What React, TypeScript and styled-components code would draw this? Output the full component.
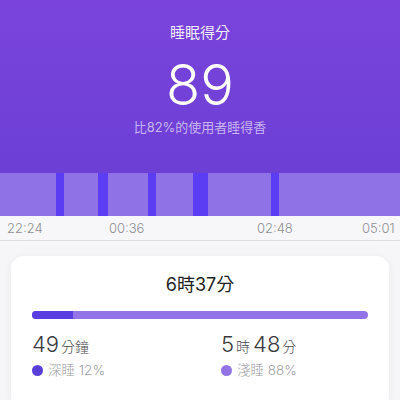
import React from 'react'
import styled, { createGlobalStyle } from 'styled-components'

const GlobalStyle = createGlobalStyle`
    body {
        margin: 0;
        background: #f6f6f8;
        font-family: Inter, "Noto Sans CJK TC", sans-serif;
    }
`

const Page = styled.div`
    width: 400px;
    height: 400px;
    overflow: hidden;
    display: flex;
    flex-flow: column nowrap;

    & > * {
        flex-shrink: 0;
    }
`

const Header = styled.header`
    height: 173px;
    background: linear-gradient(180deg, #7a44dc 0%, #6c3fd5 100%);
    display: flex;
    flex-flow: column nowrap;
    align-items: center;
    color: white;
    padding-top: 22px;
    box-sizing: border-box;
`

const Title = styled.div`
    font-size: 15px;
    line-height: 22px;
    font-weight: 400;
    color: rgba(255,255,255,0.92);
`

const Score = styled.div`
    font-size: 56px;
    line-height: 60px;
    font-weight: 300;
    margin-top: 11px;
`

const Subtitle = styled.div`
    font-size: 13px;
    line-height: 18px;
    color: #c8b6f2;
    margin-top: 3px;
`

const SleepBar = styled.div`
    display: flex;
    height: 43px;
`

const Segment = styled.div<{ $deep: boolean; $w: number }>`
    flex: 0 0 ${({ $w }) => $w}px;
    background: ${({ $deep }) => $deep ? '#5b3ef4' : '#8f73e6'};
`

const TimeAxis = styled.div`
    position: relative;
    height: 24px;
    border-bottom: 1px solid #dedee2;
    background: #f7f7f9;
`

const TimeLabel = styled.span<{ $left: number }>`
    position: absolute;
    left: ${({ $left }) => $left}px;
    top: 4px;
    font-size: 13px;
    line-height: 16px;
    font-weight: 300;
    color: #8f8f95;
`

const Card = styled.section`
    margin: 15px 11px 0;
    background: white;
    border-radius: 13px;
    box-shadow: 0 2px 10px rgba(0,0,0,0.06);
    padding: 18px 21px 30px;
`

const Total = styled.div`
    text-align: center;
    font-size: 18px;
    line-height: 22px;
    color: #1f1f24;
`

const Progress = styled.div`
    margin-top: 15px;
    height: 8px;
    border-radius: 4px;
    background: #9274e6;
    overflow: hidden;
`

const ProgressFill = styled.div<{ $pct: number }>`
    width: ${({ $pct }) => $pct}%;
    height: 100%;
    background: #5a3ee2;
`

const Stats = styled.div`
    margin-top: 11px;
    display: grid;
    grid-template-columns: 189px 1fr;
`

const Stat = styled.div`
    display: flex;
    flex-flow: column nowrap;
`

const Amount = styled.div`
    color: #3a3a40;
    line-height: 28px;
`

const Num = styled.span`
    font-size: 22px;
    font-weight: 300;
`

const Unit = styled.span`
    font-size: 14px;
    font-weight: 300;
    color: #4a4a50;
    margin: 0 3px 0 2px;
`

const Legend = styled.div`
    display: flex;
    align-items: center;
    gap: 5px;
    font-size: 13.5px;
    line-height: 18px;
    font-weight: 300;
    color: #a0a0a6;
`

const Dot = styled.span<{ $color: string }>`
    width: 11px;
    height: 11px;
    border-radius: 50%;
    background: ${({ $color }) => $color};
`

const segments: [boolean, number][] = [
    [false, 56], [true, 8], [false, 34], [true, 10], [false, 40], [true, 8],
    [false, 37], [true, 15], [false, 63], [true, 8], [false, 121],
]

const times: [string, number][] = [
    ['22:24', 7], ['00:36', 109], ['02:48', 257], ['05:01', 362],
]

export default function App() {
    return (
        <Page>
            <GlobalStyle />
            <Header>
                <Title>睡眠得分</Title>
                <Score>89</Score>
                <Subtitle>比82%的使用者睡得香</Subtitle>
            </Header>
            <SleepBar>
                {segments.map(([deep, w], i) => <Segment key={i} $deep={deep} $w={w} />)}
            </SleepBar>
            <TimeAxis>
                {times.map(([t, left]) => <TimeLabel key={t} $left={left}>{t}</TimeLabel>)}
            </TimeAxis>
            <Card>
                <Total>6時37分</Total>
                <Progress>
                    <ProgressFill $pct={12.2} />
                </Progress>
                <Stats>
                    <Stat>
                        <Amount><Num>49</Num><Unit>分鐘</Unit></Amount>
                        <Legend><Dot $color="#5a3ed8" />深睡 12%</Legend>
                    </Stat>
                    <Stat>
                        <Amount><Num>5</Num><Unit>時</Unit><Num>48</Num><Unit>分</Unit></Amount>
                        <Legend><Dot $color="#9274e4" />淺睡 88%</Legend>
                    </Stat>
                </Stats>
            </Card>
        </Page>
    )
}
